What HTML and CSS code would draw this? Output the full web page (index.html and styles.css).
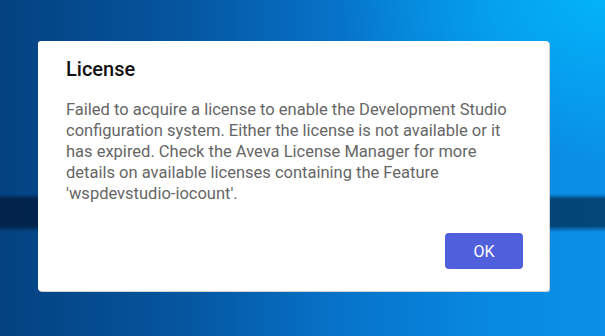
FILE: index.html
```html
<!DOCTYPE html>
<html lang="en">
<head>
  <meta charset="UTF-8">
  <meta name="viewport" content="width=device-width, initial-scale=1.0">
  <title>License</title>
  <link rel="stylesheet" href="styles.css">
</head>
<body>
<div class="dialog">
  <h2 class="dialog-title">License</h2>
  <p class="dialog-text">Failed to acquire a license to enable the Development Studio configuration system. Either the license is not available or it has expired. Check the Aveva License Manager for more details on available licenses containing the Feature 'wspdevstudio-iocount'.</p>
  <div class="dialog-actions">
    <button class="ok-btn">OK</button>
  </div>
</div>
</body>
</html>
```

FILE: styles.css
```css
html, body {
  height: 100%;
}

body {
  margin: 0;
  padding: 41px 0 0 38px;
  box-sizing: border-box;
  font-family: Roboto, 'Liberation Sans', sans-serif;
  overflow: hidden;
  background-color: #0668c0;
  background-image:
    linear-gradient(to bottom, transparent 194px, rgba(0,10,30,0.55) 199px, rgba(0,10,30,0.55) 226px, transparent 232px),
    radial-gradient(ellipse 260px 160px at 600px 0px, rgba(0,190,255,0.75), transparent),
    linear-gradient(to right, #044280 0%, #05559f 30%, #0672c8 55%, #0888e0 80%, #0a90e8 100%);
}

/* dialog box */
.dialog {
  width: 511px;
  height: 250px;
  box-sizing: border-box;
  padding: 16px 26px 22px 28px;
  background: #fff;
  border-radius: 3px;
  box-shadow: 1px 1px 0 #d4d4d4;
  display: flex;
  flex-direction: column;
}

.dialog-title {
  margin: 0;
  font-size: 20px;
  line-height: 24px;
  font-weight: 500;
  color: #111;
}

.dialog-text {
  margin: 18px 0 0 0;
  font-size: 16.5px;
  line-height: 21px;
  color: #666;
}

.dialog-actions {
  margin-top: auto;
  display: flex;
  justify-content: flex-end;
}

.ok-btn {
  width: 78px;
  height: 36px;
  border: none;
  border-radius: 4px;
  background: #505fdc;
  color: #fff;
  font-family: Roboto, 'Liberation Sans', sans-serif;
  font-size: 16px;
  cursor: pointer;
}
```
